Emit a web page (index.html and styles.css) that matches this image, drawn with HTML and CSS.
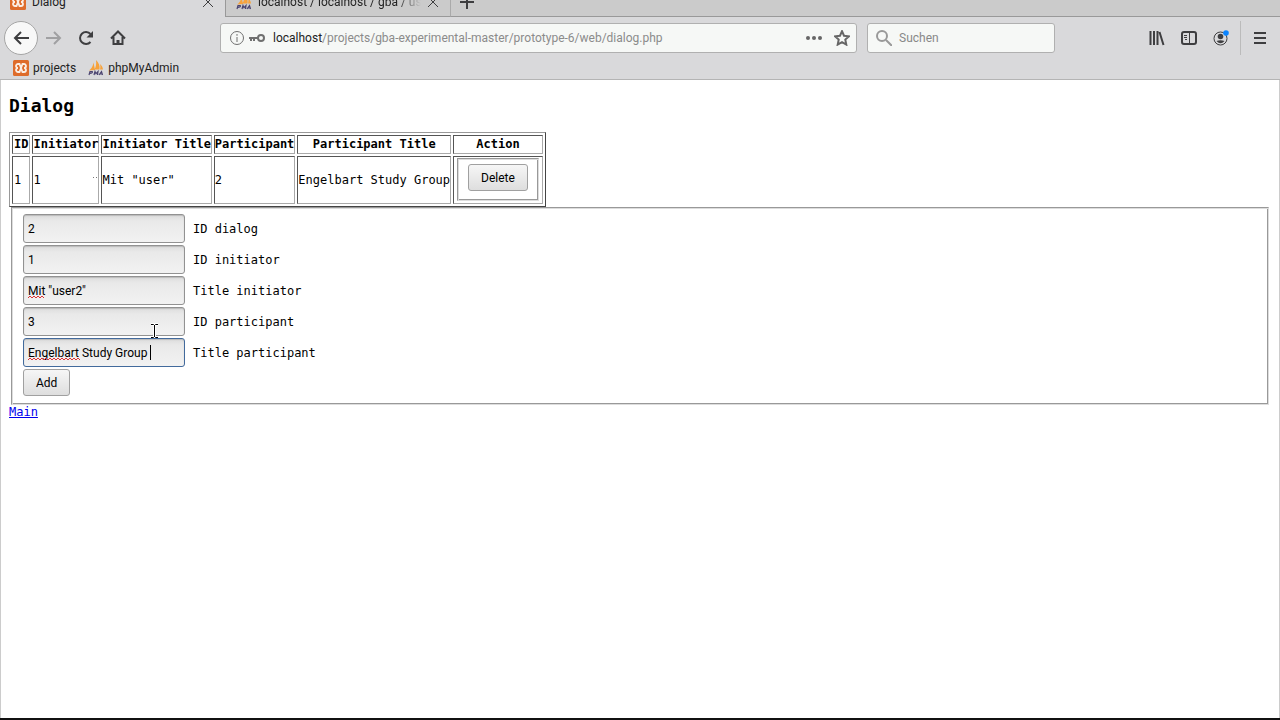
FILE: index.html
```html
<!DOCTYPE html>
<html lang="en">
<head>
    <meta charset="UTF-8">
    <meta name="viewport" content="width=device-width, initial-scale=1.0">
    <title>Dialog</title>
    <link rel="stylesheet" href="styles.css">
</head>
<body>

    <!-- shared logos -->
    <svg class="defs" width="0" height="0">
        <symbol id="xampp" viewBox="0 0 16 16">
            <rect width="16" height="16" rx="1.500" fill="#de6c2b"/>
            <path d="M5 4h1.500L9.500 12H11a2 2 0 0 0 0-4 2 2 0 0 0 0-4H9.500L6.500 12H5a2 2 0 0 1 0-4 2 2 0 0 1 0-4z" fill="none" stroke="#fbeee4" stroke-width="1.800"/>
        </symbol>
        <symbol id="pma" viewBox="0 0 16 16">
            <path d="M1 10.500C3.500 9 5 6 5.500 2.500L7 10zM6.500 9.500C8 7 8.500 4 8 0c3 3 4 6 3.500 9.500zM12 9.500c.5-2 .5-3.500 0-5.500 1.800 1.500 2.800 3.500 3 5.500z" fill="#f7a23b"/>
            <path d="M1 15l1-3.500h2.300q.7 1.800-2.500 1.800M6 15l1-3.500 1 2.200 2-2.200-.5 3.500M11 15l2.500-3.500 1 3.500M12 14h2" fill="none" stroke="#4b4470" stroke-width="1.200"/>
        </symbol>
    </svg>

    <header class="browser">
        <div class="tabs">
            <div class="tab active">
                <svg class="logo"><use href="#xampp"/></svg>
                <span class="tab-title">Dialog</span>
                <button class="icon close" aria-label="Close tab"><svg width="12" height="12" viewBox="0 0 12 12"><path d="M1 1l10 10M11 1l-10 10"/></svg></button>
            </div>
            <div class="tab">
                <svg class="logo"><use href="#pma"/></svg>
                <span class="tab-title fade">localhost / localhost / gba / user</span>
                <button class="icon close" aria-label="Close tab"><svg width="12" height="12" viewBox="0 0 12 12"><path d="M1 1l10 10M11 1l-10 10"/></svg></button>
            </div>
            <button class="icon new-tab" aria-label="New tab"><svg width="16" height="16" viewBox="0 0 16 16"><path d="M8 1v14M1 8h14"/></svg></button>
        </div>

        <div class="toolbar">
            <div class="nav">
                <button class="icon back" aria-label="Back"><svg width="16" height="16" viewBox="0 0 16 16"><path d="M16 8H2M8 2L2 8l6 6"/></svg></button>
                <button class="icon forward" aria-label="Forward"><svg width="16" height="16" viewBox="0 0 16 16"><path d="M0 8h14M8 2l6 6-6 6"/></svg></button>
                <button class="icon" aria-label="Reload"><svg width="16" height="16" viewBox="0 0 16 16"><path d="M12.500 12A6 6 0 1 1 12.500 4"/><path class="solid" d="M15 1v6.500H8.500z"/></svg></button>
                <button class="icon" aria-label="Home"><svg width="16" height="16" viewBox="0 0 16 16"><path d="M1 8.500L8 1.500l7 7M3.500 7v7h9V7"/><path class="solid" d="M6.500 15v-5h3v5z"/></svg></button>
            </div>
            <div class="url-bar">
                <svg class="info" width="16" height="16" viewBox="0 0 16 16"><circle cx="8" cy="8" r="6.500"/><path d="M8 7v5M8 4v1.800"/></svg>
                <svg class="key" width="16" height="10" viewBox="0 0 16 10"><circle cx="12" cy="5" r="3"/><path d="M9 5H0M2 5v3M5 5v3"/></svg>
                <span class="url"><b>localhost</b>/projects/gba-experimental-master/prototype-6/web/dialog.php</span>
                <button class="icon" aria-label="Page actions"><svg width="16" height="16" viewBox="0 0 16 16"><g class="solid"><circle cx="2" cy="8" r="2"/><circle cx="8" cy="8" r="2"/><circle cx="14" cy="8" r="2"/></g></svg></button>
                <button class="icon" aria-label="Bookmark"><svg width="16" height="16" viewBox="0 0 16 16"><path d="M8 1.200l2 4.500 5 .6-3.700 3.300 1 5L8 12.200l-4.300 2.400 1-5L1 6.300l5-.6z"/></svg></button>
            </div>
            <label class="search">
                <svg width="16" height="16" viewBox="0 0 16 16"><circle cx="6" cy="6" r="5"/><path d="M10 10l6 6"/></svg>
                <input type="text" placeholder="Suchen" aria-label="Suchen">
            </label>
            <div class="tools">
                <button class="icon" aria-label="Library"><svg width="16" height="16" viewBox="0 0 16 16"><path d="M1.500 1v14M5 1v14M8.500 1v14M10.500 2l4 13"/></svg></button>
                <button class="icon" aria-label="Sidebars"><svg width="16" height="16" viewBox="0 0 16 16"><rect x="1" y="2" width="14" height="12" rx="2"/><path class="thin" d="M8.500 2v12M3 5.500h3M3 7.500h3M4 9.500h2"/></svg></button>
                <button class="icon" aria-label="Account"><svg width="16" height="16" viewBox="0 0 16 16"><circle class="thin" cx="7.500" cy="8.500" r="6.500"/><circle class="solid" cx="7.500" cy="6.500" r="2.800"/><path class="solid" d="M3.500 11q4-1.500 8 0-4 4.500-8 0z"/><circle cx="13" cy="3" r="2.800" fill="#0a84ff" stroke="none"/></svg></button>
                <button class="icon menu" aria-label="Menu"><svg width="16" height="16" viewBox="0 0 16 16"><path d="M2 3h12M2 8h12M2 13h12"/></svg></button>
            </div>
        </div>

        <nav class="bookmarks">
            <a href="#"><svg class="logo"><use href="#xampp"/></svg>projects</a>
            <a href="#"><svg class="logo"><use href="#pma"/></svg>phpMyAdmin</a>
        </nav>
    </header>

    <main class="page">
        <h1>Dialog</h1>
        <table class="dialogs">
            <thead>
                <tr>
                    <th class="id">ID</th>
                    <th>Initiator</th>
                    <th>Initiator Title</th>
                    <th>Participant</th>
                    <th>Participant Title</th>
                    <th>Action</th>
                </tr>
            </thead>
            <tbody>
                <tr>
                    <td class="id">1</td>
                    <td>1<svg class="speck" width="6" height="12"><path d="M1 4.500h1M4 4.500h1"/></svg></td>
                    <td>Mit "user"</td>
                    <td>2</td>
                    <td>Engelbart Study Group</td>
                    <td class="action"><form><fieldset><button type="button">Delete</button></fieldset></form></td>
                </tr>
            </tbody>
        </table>

        <form>
            <fieldset class="add">
                <div class="row"><input type="text" id="idDialog" value="2"><label for="idDialog">ID dialog</label></div>
                <div class="row"><input type="text" id="idInitiator" value="1"><label for="idInitiator">ID initiator</label></div>
                <div class="row"><input type="text" id="titleInitiator" value='Mit "user2"'><label for="titleInitiator">Title initiator</label>
                    <svg class="squiggle" width="16" height="4"><path d="M0 3l2-2 2 2 2-2 2 2 2-2 2 2 2-2 2 2"/></svg></div>
                <div class="row"><input type="text" id="idParticipant" value="3"><label for="idParticipant">ID participant</label>
                    <svg class="pointer" width="9" height="16" viewBox="0 0 9 16"><path d="M1 1.500h2.500l1 1 1-1H8M1 14.500h2.500l1-1 1 1H8M4.500 2v12" stroke="#fff" stroke-width="3"/><path d="M1 1.500h2.500l1 1 1-1H8M1 14.500h2.500l1-1 1 1H8M4.500 2v12" stroke="#000"/></svg></div>
                <div class="row"><input type="text" class="focused" id="titleParticipant" value="Engelbart Study Group"><label for="titleParticipant">Title participant</label>
                    <svg class="squiggle" width="52" height="4"><path d="M0 3l2-2 2 2 2-2 2 2 2-2 2 2 2-2 2 2 2-2 2 2 2-2 2 2 2-2 2 2 2-2 2 2 2-2 2 2 2-2 2 2 2-2 2 2 2-2 2 2 2-2 2 2"/></svg>
                    <span class="caret"></span></div>
                <button type="button">Add</button>
            </fieldset>
        </form>
        <a href="#">Main</a>
    </main>

</body>
</html>
```

FILE: styles.css
```css
* { box-sizing: border-box; }
body { margin: 0; min-height: 100vh; display: flex; flex-direction: column; background-color: #fff; border-bottom: 2px solid #111; font-family: "DejaVu Sans Mono", monospace; font-size: 12px; color: #000; }
.defs { position: absolute; }

/* browser window */
.browser { background-color: #d9d9db; border-bottom: 1px solid #b4b4b4; font-family: Roboto, sans-serif; font-size: 12px; color: #222; }
.browser svg { flex: none; fill: none; stroke: #3e3e40; stroke-width: 2; }
.browser svg.logo { width: 16px; height: 16px; stroke: none; }
.browser .solid { fill: #3e3e40; stroke: none; }
.browser .thin { stroke-width: 1; }
.icon { display: flex; align-items: center; justify-content: center; padding: 0; border: none; background: none; }

.tabs { display: flex; align-items: flex-end; height: 17px; overflow: hidden; background-color: #cbcbcb; }
.tab { display: flex; align-items: center; height: 30px; flex: 0 0 225px; min-width: 0; padding: 0 11px 0 10px; border-bottom: 1px solid #999; }
.tab + .tab { border-left: 1px solid #999; }
.tab.active { background-color: #d9d9db; border-bottom-color: #d9d9db; }
.tab-title { flex: 1; margin: 0 6px; overflow: hidden; white-space: nowrap; }
.tab-title.fade { mask-image: linear-gradient(to right, #000 85%, transparent); }
.tabs .close svg { stroke-width: 1; }
.new-tab { height: 30px; flex: 1; justify-content: flex-start; padding-left: 8px; border-left: 1px solid #aaa; border-bottom: 1px solid #999; }

.toolbar { display: flex; align-items: center; height: 41px; padding: 0 12px 0 4px; }
.nav { display: flex; gap: 16px; width: 216px; align-items: center; }
.back { width: 34px; height: 34px; border: 1px solid #a5a5a5; border-radius: 50%; background-color: #f8f8f8; margin-right: -8px; }
.forward svg { stroke: #a0a0a2; }
.url-bar, .search { display: flex; align-items: center; height: 30px; border: 1px solid #b0b0b0; border-radius: 3px; background-color: #f6f8f6; }
.url-bar { flex: 1; padding: 0 6px 0 8px; }
.url-bar .info { stroke: #707070; stroke-width: 1; margin-right: 4px; }
.url-bar .key { stroke: #707070; margin-right: 8px; }
.url-bar .icon { margin-left: 12px; }
.url-bar .icon svg { stroke: #666; }
.url-bar .solid { fill: #666; }
.url { flex: 1; color: #8b8b8b; white-space: nowrap; overflow: hidden; }
.url b { font-weight: normal; color: #222; }
.search { width: 188px; margin-left: 10px; padding-left: 8px; }
.search svg { stroke: #999; }
.search input { width: 100%; margin-left: 7px; padding: 0; border: none; outline: none; background: none; font: inherit; }
.search input::placeholder { color: #888; }
.tools { display: flex; align-items: center; gap: 16px; margin-left: 94px; }
.menu { height: 34px; margin-left: -5px; padding-left: 11px; border-left: 1px solid #bbb; }

.bookmarks { display: flex; gap: 12px; height: 21px; padding: 0 0 2px 13px; }
.bookmarks a { display: flex; align-items: center; gap: 4px; color: #222; text-decoration: none; }

/* page content */
.page { flex: 1; padding: 15px 10px 0 8px; border-left: 1px solid #ccc; border-right: 1px solid #ccc; }
h1 { margin: 0 0 16px; font-size: 18px; line-height: 21px; }
.dialogs { border: 1px solid; border-color: #999 #444 #444 #999; border-spacing: 2px; }
.dialogs th, .dialogs td { padding: 1px 0; border: 1px solid; border-color: #555 #aaa #aaa #555; line-height: 15px; }
.dialogs td { height: 48px; }
.dialogs .id { padding: 1px; }
.dialogs .action { padding: 0 3px 1px; }
fieldset { margin: 0 0 0 2px; border: 1px solid; border-color: #999 #ddd #ddd #999; box-shadow: inset 1px 1px #ddd, inset -1px -1px #999; padding: 6px 11px; }
.action fieldset { margin: 0; padding: 5px 10px 9px; }
.page button { display: block; height: 27px; padding: 0 12px; border: 1px solid #a0a0a0; border-radius: 3px; background: linear-gradient(#f6f6f6, #dedede); font-family: Roboto, sans-serif; font-size: 12px; }
.add { padding-bottom: 8px; }
.row { position: relative; display: flex; align-items: center; margin-bottom: 2px; }
.row input { width: 162px; height: 29px; margin-right: 8px; padding: 0 4px; border: 1px solid #929292; border-radius: 3px; background: linear-gradient(#dcdcdc, #e9e9e9 6px, #f2f2f2); box-shadow: inset 0 1px 1px #bbb; outline: none; font-family: Roboto, sans-serif; font-size: 12px; }
.row .focused { border-color: #426a9c; }
.squiggle { position: absolute; left: 5px; top: 19px; fill: none; stroke: #d33; stroke-width: 1; }
.caret { position: absolute; left: 127px; top: 7px; width: 1px; height: 15px; background-color: #000; }
.pointer { position: absolute; left: 127px; top: 16px; fill: none; }
.speck { float: right; stroke: #777; }
.page a { color: #0000ee; line-height: 15px; }
```
